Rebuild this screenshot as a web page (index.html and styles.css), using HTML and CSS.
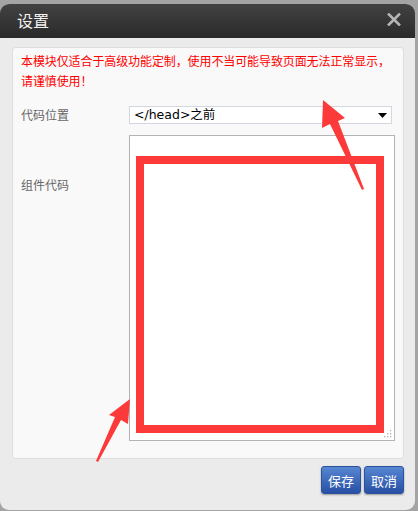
FILE: index.html
```html
<!DOCTYPE html>
<html lang="zh-CN">
<head>
<meta charset="utf-8">
<title>设置</title>
<link rel="stylesheet" href="styles.css">
</head>
<body>
<div class="dialog">
  <div class="titlebar">
    <span class="title">设置</span>
    <svg class="close" width="14" height="13" viewBox="0 0 14 13"><path d="M1 0.5 L13 12.5 M13 0.5 L1 12.5" stroke="#b4b4b4" stroke-width="2.6" fill="none"/></svg>
  </div>
  <div class="content">
    <div class="panel">
      <p class="warn">本模块仅适合于高级功能定制，使用不当可能导致页面无法正常显示，<br>请谨慎使用！</p>
      <div class="form">
        <label class="label">代码位置</label>
        <div class="select"><span>&lt;/head&gt;之前</span><svg width="9" height="5" viewBox="0 0 9 5"><path d="M0 0 H9 L4.5 5 Z" fill="#000"/></svg></div>
        <label class="label label-code">组件代码</label>
        <div class="textarea"><svg class="grip" width="8" height="8" viewBox="0 0 8 8"><g fill="#b0b0b0"><rect x="6" y="0" width="1.3" height="1.3"/><rect x="3" y="3" width="1.3" height="1.3"/><rect x="6" y="3" width="1.3" height="1.3"/><rect x="0" y="6" width="1.3" height="1.3"/><rect x="3" y="6" width="1.3" height="1.3"/><rect x="6" y="6" width="1.3" height="1.3"/></g></svg></div>
      </div>
    </div>
    <div class="actions">
      <button class="btn">保存</button>
      <button class="btn">取消</button>
    </div>
  </div>
  <svg class="annot" width="418" height="511" viewBox="0 0 418 511">
    <rect x="140" y="160" width="240" height="269" fill="none" stroke="#fd3a3a" stroke-width="8"/>
    <polygon points="323,100 345,118 338,121 364,189 362,190 330,124 322,128" fill="#fd3a3a"/>
    <polygon points="130,399 128,424 121,420 98,462 96,461 115,417 109,415" fill="#fd3a3a"/>
  </svg>
</div>
</body>
</html>
```
FILE: styles.css
```css
html, body {
  margin: 0;
  padding: 0;
}
body {
  background: #a4a4a4;
  width: 418px;
  height: 511px;
  overflow: hidden;
  font-family: "Noto Sans CJK SC", "Liberation Sans", sans-serif;
}
.dialog {
  position: relative;
  margin-top: 4px;
  width: 415px;
  height: 506px;
  border-radius: 9px;
  background: #ebebeb;
  overflow: hidden;
}
.titlebar {
  height: 34px;
  background: linear-gradient(#424242, #2a2a2a);
  display: flex;
  align-items: center;
  justify-content: space-between;
  padding: 0 14px 0 17px;
}
.title {
  color: #f2f2f2;
  font-size: 16px;
  line-height: 20px;
  margin-top: -2px;
}
.close {
  display: block;
  margin-top: -3px;
}
.content {
  padding: 9px 11px 0 12px;
}
.panel {
  height: 407px;
  background: #f9f9f9;
  border: 1px solid #dedede;
  border-radius: 3px;
  padding: 3px 0 0 8px;
  box-sizing: content-box;
}
.warn {
  margin: 0;
  color: #ff0000;
  font-size: 12px;
  line-height: 20px;
  letter-spacing: -0.1px;
}
.form {
  margin-top: 15px;
  display: grid;
  grid-template-columns: 108px 266px;
  row-gap: 11px;
}
.label {
  color: #666;
  font-size: 12px;
  line-height: 18px;
}
.label-code {
  padding-top: 41px;
}
.select {
  width: 263px;
  height: 18px;
  box-sizing: border-box;
  border: 1px solid #d3d7df;
  background: #fff;
  display: flex;
  align-items: center;
  justify-content: space-between;
  padding: 0 4px 0 4px;
  font-size: 13px;
  color: #000;
  font-family: "DejaVu Sans", "Noto Sans CJK SC", sans-serif;
}
.select span {
  line-height: 16px;
  font-size: 12.5px;
}
.select svg {
  display: block;
  margin-right: 0;
}
.textarea {
  position: relative;
  width: 266px;
  height: 306px;
  box-sizing: border-box;
  border: 1px solid #b3b3b3;
  background: #fff;
}
.grip {
  position: absolute;
  right: 2px;
  bottom: 2px;
}
.actions {
  display: flex;
  justify-content: flex-end;
  gap: 3px;
  padding-top: 7px;
}
.btn {
  width: 40px;
  height: 28px;
  border: 1px solid #2a529e;
  border-radius: 3px;
  background: linear-gradient(#5686d2, #2850a4);
  color: #fff;
  font-family: "Noto Sans CJK SC", sans-serif;
  font-size: 13px;
  padding: 0;
  box-shadow: 0 1px 2px rgba(0,0,0,0.35);
}
.annot {
  position: absolute;
  left: 0;
  top: -4px;
  pointer-events: none;
}
```
